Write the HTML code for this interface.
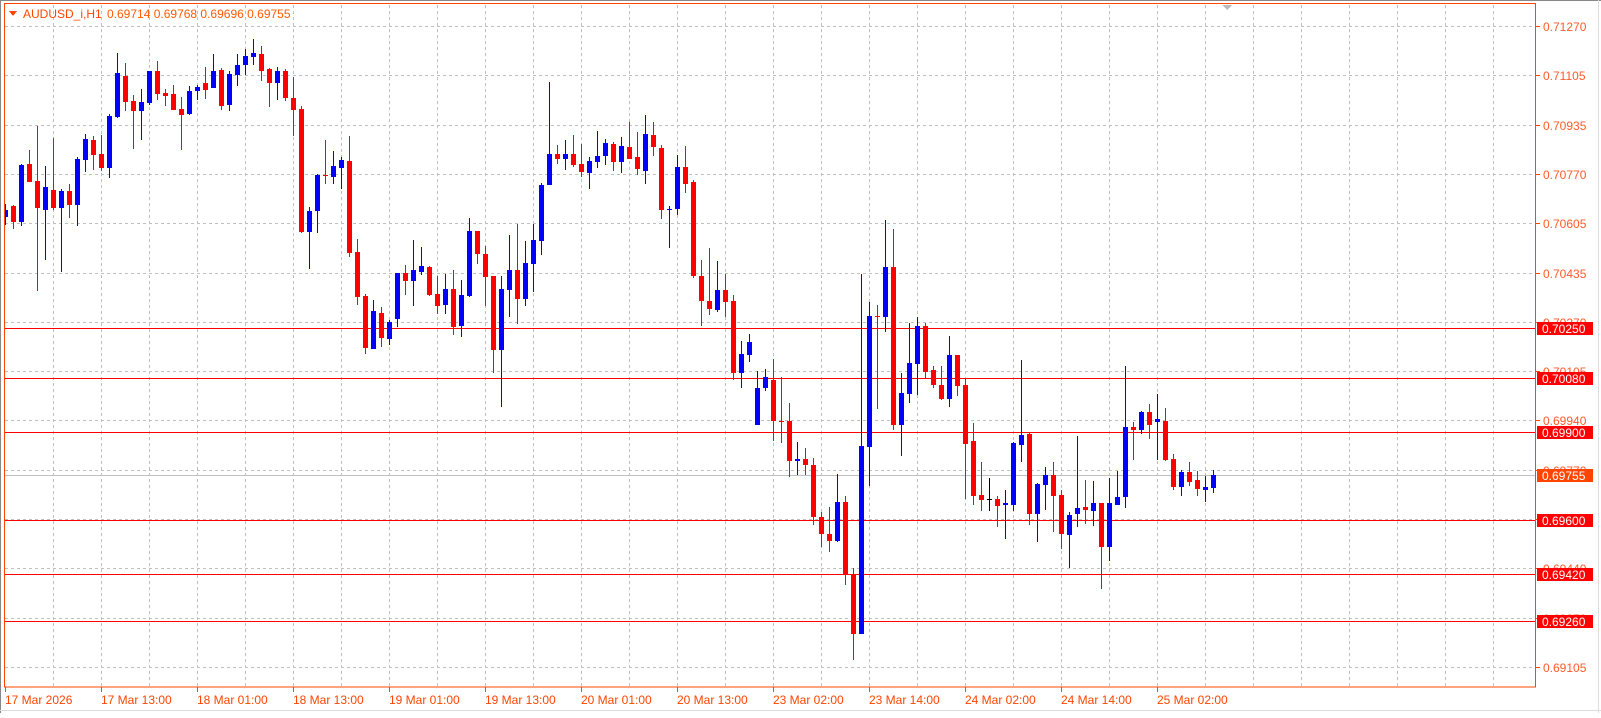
<!DOCTYPE html>
<html><head><meta charset="utf-8">
<style>
html,body{margin:0;padding:0;background:#fff;}
body{width:1601px;height:713px;overflow:hidden;position:relative;font-family:"Liberation Sans",sans-serif;}
svg text{font-family:"Liberation Sans",sans-serif;font-size:12px;}
</style></head>
<body>
<svg id="c" width="1601" height="713" xmlns="http://www.w3.org/2000/svg" shape-rendering="crispEdges">
<rect x="0" y="0" width="1601" height="713" fill="#fff"/>
<line x1="0" y1="0.5" x2="1601" y2="0.5" stroke="#888"/>
<line x1="0.5" y1="0" x2="0.5" y2="713" stroke="#888"/>
<line x1="1598.5" y1="0" x2="1598.5" y2="713" stroke="#ddd"/>
<line x1="0" y1="710.5" x2="1601" y2="710.5" stroke="#ddd"/>
<g id="grid"></g>
<g id="hl"></g>
<g id="cd"></g>
<rect x="4.5" y="3.5" width="1531" height="683.5" fill="none" stroke="#FF4500"/>
<polygon points="1222,5 1232,5 1227,10" fill="#bbb"/>
<polygon points="9,11 17,11 13,16" fill="#FF4500"/>
<text x="23" y="18" fill="#FF4500">AUDUSD_i,H1</text>
<text x="107" y="18" fill="#FF5A00">0.69714 0.69768 0.69696 0.69755</text>
<g id="ax"></g>
</svg>
<script>
var NS="http://www.w3.org/2000/svg";
function el(p,t,a,txt){var e=document.createElementNS(NS,t);for(var k in a)e.setAttribute(k,a[k]);if(txt)e.textContent=txt;document.getElementById(p).appendChild(e);return e;}
var dash={"stroke":"#c0c0c0","stroke-dasharray":"3,3","stroke-width":"1"};
for(var k=1;k<=31;k++){var x=5+48*k+0.5;var a=Object.assign({x1:x,y1:5,x2:x,y2:686},dash);el("grid","line",a);}
var prices=["0.71270","0.71105","0.70935","0.70770","0.70605","0.70435","0.70270","0.70105","0.69940","0.69770","0.69605","0.69440","0.69270","0.69105"];
for(var i=0;i<14;i++){var y=Math.round(26+49.31*i)+0.5;el("grid","line",Object.assign({x1:5,y1:y,x2:1535,y2:y},dash));
 el("ax","line",{x1:1536,y1:y,x2:1540,y2:y,stroke:"#FF4500"});
 el("ax","text",{x:1543,y:y+4.5,fill:"#FF5A2A"},prices[i]);}
function py(p){return 26+(0.71270-p)*100000*0.2961;}
el("hl","line",{x1:5,y1:475.5,x2:1535,y2:475.5,stroke:"#c0c0c0"});
var lv=[[0.70250,"0.70250"],[0.70080,"0.70080"],[0.69900,"0.69900"],[0.69600,"0.69600"],[0.69420,"0.69420"],[0.69260,"0.69260"]];
lv.forEach(function(l){var y=Math.round(py(l[0]))+0.5;el("hl","line",{x1:5,y1:y,x2:1535,y2:y,stroke:"#FF0000"});});
var z4=[[174,180,187,195,'b'],[175,176,192,199,'r'],[134,135,192,196,'b'],[120,134,152,152,'r'],[96,151,178,261,'r'],[136,157,180,230,'b'],[108,160,178,180,'r'],[159,161,178,242,'b'],[154,161,175,188,'r'],[127,129,175,196,'b'],[104,109,130,142,'b'],[106,110,125,140,'r'],[105,124,138,141,'r'],[84,86,138,148,'b'],[23,43,87,88,'b'],[33,46,72,81,'r'],[65,71,81,119,'r'],[59,72,81,110,'b'],[41,41,73,75,'b'],[31,41,64,70,'r'],[59,63,66,76,'r'],[55,64,80,80,'r'],[67,79,85,120,'r'],[56,61,84,85,'b'],[55,57,61,70,'b'],[37,53,60,69,'r'],[24,41,58,58,'b'],[38,40,76,80,'r'],[41,44,75,81,'b'],[24,35,45,56,'b'],[19,26,35,45,'b'],[9,23,27,35,'b'],[16,24,41,51,'r'],[38,39,53,77,'r'],[37,41,53,70,'b'],[39,41,68,71,'r'],[47,68,80,106,'r']];
var data=z4.map(function(c){return [c[0]+30,c[1]+30,c[2]+30,c[3]+30,c[4]];});
var z5=[[106,109,232,233,'r'],[207,211,232,269,'b'],[174,175,211,233,'b'],[140,175,176,184,'r'],[151,166,177,184,'b'],[157,160,168,189,'b'],[136,161,253,257,'r'],[239,252,297,305,'r'],[294,296,348,354,'r'],[300,311,349,349,'b'],[307,313,338,347,'r'],[320,322,339,345,'b'],[273,273,319,327,'b'],[265,273,281,295,'r'],[240,270,281,306,'b'],[247,266,272,275,'b'],[266,267,295,296,'r'],[276,294,306,314,'r'],[274,289,305,314,'b'],[270,289,327,335,'r'],[280,295,326,337,'b'],[218,231,296,297,'b'],[231,231,254,264,'r'],[246,254,277,306,'r'],[276,276,350,373,'r'],[276,289,350,407,'b'],[235,270,290,317,'b'],[224,270,299,324,'r'],[241,263,299,306,'b'],[224,240,264,292,'b'],[183,185,241,255,'b'],[82,154,185,185,'b'],[145,154,159,164,'r'],[140,154,159,170,'b'],[135,154,165,167,'r'],[144,164,172,177,'r'],[157,161,173,189,'b'],[131,156,162,168,'b']];
data=data.concat(z5);
var z6=[[136,140,152,161,'b'],[139,141,158,166,'r'],[135,143,158,168,'b'],[121,144,155,155,'r'],[130,153,164,170,'r'],[114,132,166,178,'b'],[121,133,144,152,'r'],[142,145,203,211,'r'],[199,202,203,238,'b'],[151,163,202,207,'b'],[143,163,178,187,'r'],[175,177,264,266,'r'],[249,264,288,311,'r'],[238,288,295,301,'r'],[250,277,296,298,'b'],[262,277,289,303,'r'],[282,288,355,361,'r'],[325,337,355,369,'b'],[318,326,338,345,'b'],[353,369,403,403,'b'],[351,359,369,372,'b'],[342,361,400,418,'r'],[359,400,401,420,'r'],[383,400,437,452,'r'],[419,435,437,450,'b'],[425,435,441,450,'r'],[434,441,489,497,'r'],[485,489,505,517,'r'],[480,505,512,522,'r'],[449,475,512,513,'b'],[470,475,543,553,'r'],[537,543,598,623,'r'],[262,423,598,598,'b'],[289,302,424,460,'b'],[291,302,303,388,'r'],[212,256,303,317,'b'],[220,256,403,408,'r']];
data=data.concat(z6.map(function(c){return [100+1.0714*(c[0]-100),100+1.0714*(c[1]-100),100+1.0714*(c[2]-100),100+1.0714*(c[3]-100),c[4]];}));
var z7=[[373,393,425,456,'b'],[323,363,394,403,'b'],[317,326,364,395,'b'],[323,326,372,379,'r'],[366,370,385,388,'r'],[366,385,399,400,'r'],[336,355,399,407,'b'],[355,355,386,396,'r'],[379,385,444,499,'r'],[423,441,496,505,'r'],[462,495,500,511,'r'],[478,499,500,511,'k'],[496,499,506,527,'r'],[490,503,505,539,'b'],[442,443,505,511,'b'],[360,435,445,462,'b'],[433,434,514,525,'r'],[483,484,514,542,'b'],[467,475,485,510,'b'],[462,475,496,532,'r'],[490,495,534,549,'r'],[512,515,535,568,'b'],[436,508,514,527,'b'],[480,507,510,524,'r'],[481,503,511,526,'b'],[503,503,547,589,'r'],[478,503,547,561,'b'],[471,497,505,505,'b'],[366,427,497,508,'b'],[422,427,430,460,'r'],[411,412,430,434,'b'],[404,412,425,439,'r'],[394,419,422,460,'b'],[408,421,460,461,'r'],[454,459,487,490,'r'],[470,472,487,496,'b'],[462,472,482,486,'r'],[471,480,489,496,'r'],[476,487,490,502,'b'],[470,475,488,493,'b']];
data=data.concat(z7);
var col={b:"#0000FF",r:"#FF0000",k:"#000"};
data.forEach(function(c,i){var cx=5+8*i;var f=col[c[4]];
 var t=Math.round(c[0]),bt=Math.round(c[1]),bb=Math.round(c[2]),lo=Math.round(c[3]);
 el("cd","rect",{x:cx,y:t,width:1,height:Math.max(1,lo-t),fill:f});
 var x0=Math.max(5,cx-2);
 el("cd","rect",{x:x0,y:bt,width:cx+3-x0,height:Math.max(1,bb-bt),fill:f});});
lv.forEach(function(l){var y=Math.round(py(l[0]));el("ax","rect",{x:1537,y:y-6,width:56,height:13,fill:"#FF0000"});el("ax","text",{x:1542,y:y+5,fill:"#fff"},l[1]);});
el("ax","rect",{x:1537,y:469,width:56,height:13,fill:"#FF4500"});el("ax","text",{x:1542,y:480,fill:"#fff"},"0.69755");
var dl=["17 Mar 2026","17 Mar 13:00","18 Mar 01:00","18 Mar 13:00","19 Mar 01:00","19 Mar 13:00","20 Mar 01:00","20 Mar 13:00","23 Mar 02:00","23 Mar 14:00","24 Mar 02:00","24 Mar 14:00","25 Mar 02:00"];
dl.forEach(function(d,i){var x=5+96*i;el("ax","line",{x1:x+0.5,y1:687,x2:x+0.5,y2:692,stroke:"#FF4500"});el("ax","text",{x:x,y:704,fill:"#FF4500"},d);});
</script>
</body></html>
